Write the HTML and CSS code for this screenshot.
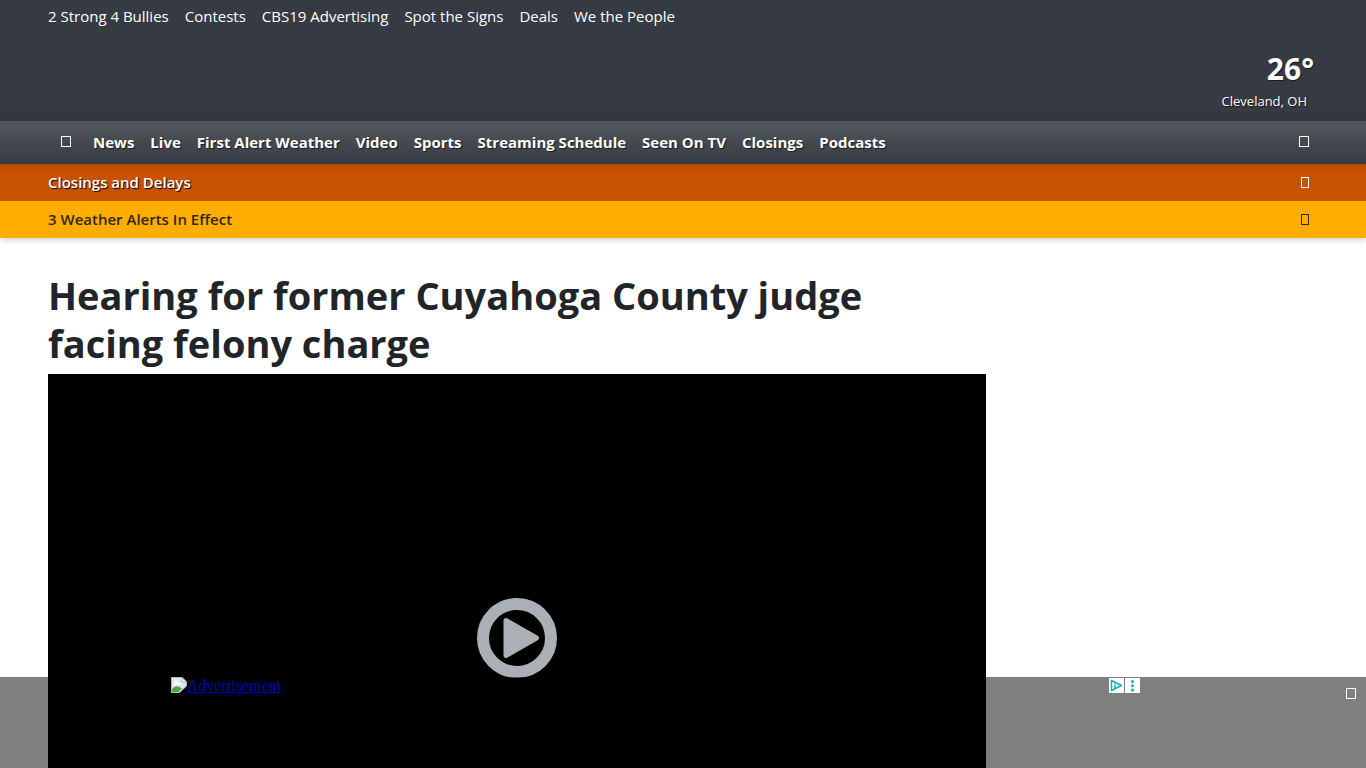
FILE: index.html
```html
<!DOCTYPE html>
<html lang="en">
<head>
  <meta charset="UTF-8">
  <meta name="viewport" content="width=device-width, initial-scale=1.0">
  <title>Hearing for former Cuyahoga County judge facing felony charge</title>
  <link rel="stylesheet" href="styles.css">
</head>
<body>
  <header class="site-header">
    <div class="masthead">
      <nav class="top-links" aria-label="Promotions">
        <a href="#">2 Strong 4 Bullies</a>
        <a href="#">Contests</a>
        <a href="#">CBS19 Advertising</a>
        <a href="#">Spot the Signs</a>
        <a href="#">Deals</a>
        <a href="#">We the People</a>
      </nav>
      <a class="weather" href="#">
        <span class="temp">26°</span>
        <span class="city">Cleveland, OH</span>
      </a>
    </div>

    <nav class="main-nav" aria-label="Main">
      <a class="home" href="#" aria-label="Home"><span class="glyph"></span></a>
      <a href="#">News</a>
      <a href="#">Live</a>
      <a href="#">First Alert Weather</a>
      <a href="#">Video</a>
      <a href="#">Sports</a>
      <a href="#">Streaming Schedule</a>
      <a href="#">Seen On TV</a>
      <a href="#">Closings</a>
      <a href="#">Podcasts</a>
      <button type="button" class="icon-btn" aria-label="Search"><span class="glyph"></span></button>
    </nav>

    <div class="alert closings">
      <a href="#">Closings and Delays</a>
      <button type="button" class="icon-btn" aria-label="Show closings"><span class="glyph small"></span></button>
    </div>
    <div class="alert weather-alerts">
      <a href="#">3 Weather Alerts In Effect</a>
      <button type="button" class="icon-btn" aria-label="Show alerts"><span class="glyph small"></span></button>
    </div>
  </header>

  <div class="page">
    <main class="story">
      <h1>Hearing for former Cuyahoga County judge facing felony charge</h1>
      <div class="video">
        <button type="button" class="play" aria-label="Play video">
          <svg viewBox="0 0 80 80" width="80" height="80">
            <circle cx="40" cy="40" r="34" fill="none" stroke="#abb0b6" stroke-width="12"/>
            <path d="M29 22.500L59.500 40L29 57.500Z" fill="#abb0b6" stroke="#abb0b6" stroke-width="5" stroke-linejoin="round"/>
          </svg>
        </button>
      </div>
    </main>
    <aside class="sidebar"></aside>
  </div>

  <div class="sticky-ad">
    <div class="ad-slot">
      <a class="ad-link" href="#">
        <svg viewBox="0 0 16 16" width="16" height="16">
          <path d="M0.500 0.500H11L15.500 5V9L8.500 15.500H0.500Z" fill="#dce8f8" stroke="#b4b8be"/>
          <path d="M11 0.500V5H15.500Z" fill="#fff" stroke="#b4b8be"/>
          <path d="M3 6a2 2 0 0 1 4-1a2 2 0 0 1 2 3H3Z" fill="#fff"/>
          <path d="M1 12Q5 7 11 11.500L7.500 15H1Z" fill="#55a344"/>
        </svg><span>Advertisement</span>
      </a>
      <div class="ad-choices">
        <button type="button" aria-label="AdChoices">
          <svg viewBox="0 0 15 15" width="15" height="15">
            <path d="M2.500 2.500L12.500 7.500L2.500 12.500Z" fill="none" stroke="#10aebc" stroke-width="1.500" stroke-linejoin="round"/>
            <path d="M6 6.500V10" stroke="#10aebc" stroke-width="1.500"/>
            <circle cx="6" cy="5" r="0.800" fill="#10aebc"/>
          </svg>
        </button>
        <button type="button" aria-label="Ad options">
          <svg viewBox="0 0 15 15" width="15" height="15" fill="#10aebc">
            <circle cx="7.500" cy="3.500" r="1.500"/>
            <circle cx="7.500" cy="7.800" r="1.500"/>
            <circle cx="7.500" cy="12" r="1.500"/>
          </svg>
        </button>
      </div>
    </div>
    <button type="button" class="ad-close" aria-label="Close ad"><span class="glyph"></span></button>
  </div>
</body>
</html>
```
FILE: styles.css
```css
* {
  box-sizing: border-box;
}
body {
  margin: 0;
  font-family: "Segoe UI", "Open Sans", sans-serif;
  font-size: 15px;
  line-height: 24px;
  color: #212529;
  background: #fff;
}
a {
  color: inherit;
  text-decoration: none;
}
button {
  padding: 0;
  border: 0;
  background: none;
  color: inherit;
  cursor: pointer;
}
svg {
  display: block;
}
/* empty box icons */
.glyph {
  display: block;
  width: 10px;
  height: 11px;
  border: 1px solid currentColor;
}
.glyph.small {
  width: 8px;
}

.site-header {
  color: #fff;
  box-shadow: 0 2px 6px rgba(0, 0, 0, 0.2);
}
.masthead {
  display: flex;
  flex-direction: column;
  gap: 23px;
  padding: 4px 48px 8px;
  background: linear-gradient(#363a42 90%, #30343b);
}
.top-links {
  display: flex;
  gap: 16px;
}
.weather {
  align-self: flex-end;
  display: flex;
  flex-direction: column;
  align-items: flex-end;
  gap: 2px;
  text-shadow: 1px 1px 1px rgba(0, 0, 0, 0.6);
}
.temp {
  padding-right: 4px;
  font-size: 30px;
  font-weight: 700;
  line-height: 36px;
}
.city {
  padding-right: 11px;
  font-size: 13px;
  line-height: 24px;
}

.main-nav {
  display: flex;
  align-items: center;
  gap: 16px;
  height: 43px;
  padding: 0 48px 2px;
  font-weight: 700;
  background: linear-gradient(#53575e, #363a42);
  text-shadow: 1px 1px 1px rgba(0, 0, 0, 0.6);
}
.home {
  padding: 0 6px 0 13px;
}
.icon-btn {
  margin-left: auto;
  padding: 8px 9px;
}

.alert {
  display: flex;
  align-items: center;
  height: 37px;
  padding: 0 48px;
  font-weight: 600;
}
.alert a {
  padding-bottom: 2px;
}
.closings {
  background: linear-gradient(#b54a00, #c75300 20%);
  text-shadow: 1px 1px 1px #000;
}
.weather-alerts {
  color: #33250f;
  background: #ffae00;
}

.page {
  display: flex;
  gap: 32px;
  padding: 33px 48px;
}
.story {
  flex: 1;
}
.sidebar {
  width: 300px;
}
h1 {
  margin: 0 0 7px;
  font-size: 38px;
  font-weight: 700;
  line-height: 48px;
}
.video {
  display: flex;
  align-items: center;
  justify-content: center;
  aspect-ratio: 16 / 9;
  background: #000;
}

.sticky-ad {
  position: fixed;
  right: 0;
  bottom: 0;
  left: 0;
  display: flex;
  align-items: flex-start;
  height: 91px;
  background: rgba(0, 0, 0, 0.5);
}
.ad-slot {
  flex: 1;
  display: flex;
  justify-content: space-between;
  max-width: 970px;
  margin: 0 auto;
}
.ad-link {
  display: flex;
  font-family: "Liberation Serif", serif;
  font-size: 16px;
  line-height: 18px;
  color: #0000c4;
  text-decoration: underline;
}
.ad-choices {
  display: flex;
  gap: 1px;
  padding: 1px 1px 0 0;
}
.ad-choices button {
  height: 15px;
  background: #fff;
}
.ad-close {
  display: flex;
  justify-content: flex-end;
  width: 55px;
  padding: 11px 10px;
  color: #fff;
}
```
